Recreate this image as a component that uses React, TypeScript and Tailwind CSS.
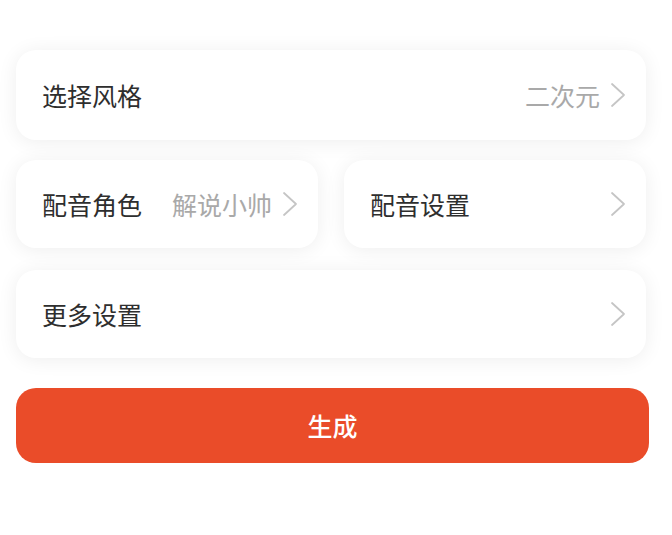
const font = { fontFamily: '"Noto Sans CJK SC", "Noto Sans", sans-serif' };

function Chevron() {
  return (
    <svg width="16" height="26" viewBox="0 0 16 26" fill="none" className="shrink-0">
      <path d="M2 2 L14 13 L2 24" stroke="#c5c5c5" strokeWidth="1.8" strokeLinecap="round" strokeLinejoin="round" />
    </svg>
  );
}

function Row({ label, value, className }: { label: string; value?: string; className: string }) {
  return (
    <div className={`flex items-center justify-between rounded-[20px] bg-white pl-[26px] pr-[20px] shadow-[0_2px_20px_rgba(0,0,0,0.07)] ${className}`}>
      <span className="text-[25px] leading-none text-[#2e2e2e]">{label}</span>
      <div className="flex items-center gap-[10px]">
        {value && <span className="text-[25px] leading-none text-[#a9a9a9]">{value}</span>}
        <Chevron />
      </div>
    </div>
  );
}

export default function App() {
  return (
    <div className="min-h-screen bg-white" style={font}>
      <div className="ml-4 flex w-[630px] flex-col pt-[50px]">
        <Row label="选择风格" value="二次元" className="h-[90px]" />
        <div className="mt-5 grid grid-cols-2 gap-[26px]">
          <Row label="配音角色" value="解说小帅" className="h-[88px] pr-[18px]" />
          <Row label="配音设置" className="h-[88px]" />
        </div>
        <Row label="更多设置" className="mt-[22px] h-[88px]" />
        <button className="mt-[30px] flex h-[75px] w-[633px] items-center justify-center rounded-[20px] bg-[#ea4c29] text-[25px] font-medium text-white">
          生成
        </button>
      </div>
    </div>
  );
}
